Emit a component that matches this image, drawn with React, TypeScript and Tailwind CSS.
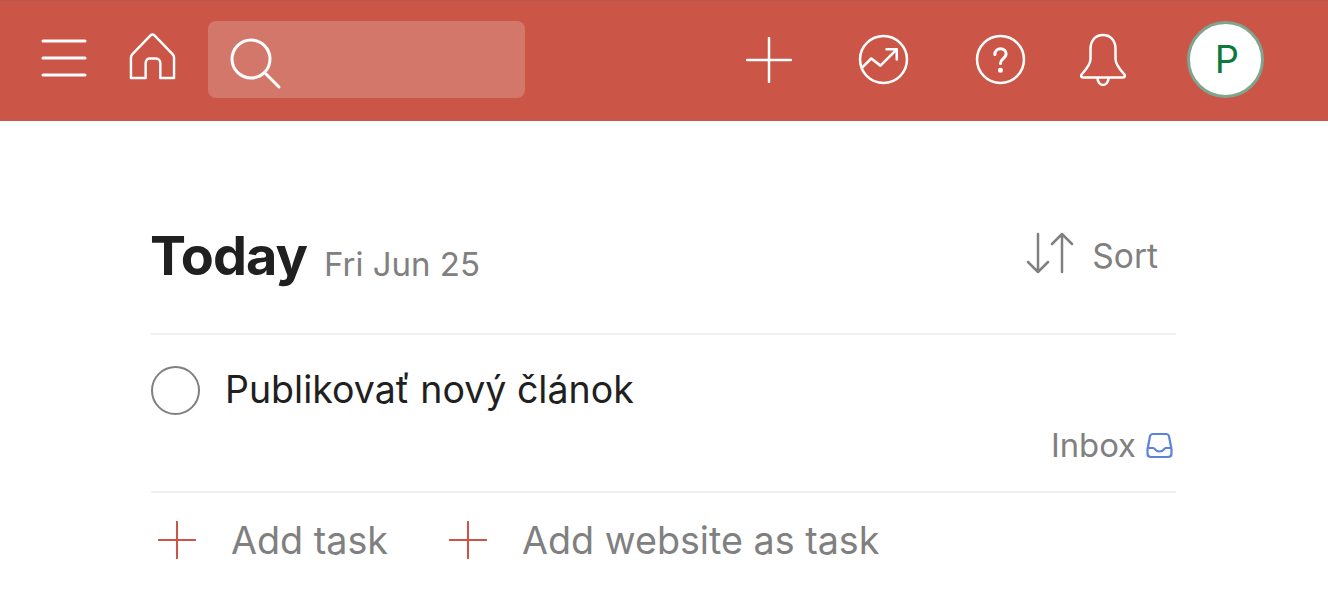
function Menu() {
  return (
    <svg width="46" height="38" viewBox="0 0 46 38" fill="none" stroke="white" strokeWidth="3" strokeLinecap="round">
      <path d="M2 2h42M2 19h42M2 36h42" />
    </svg>
  );
}

function Home() {
  return (
    <svg width="47" height="47" viewBox="0 0 48 48" fill="none" stroke="white" strokeWidth="2.500" strokeLinejoin="round">
      <path d="M2 25c0-1.500.5-2.500 1.500-3.500L22 2.500c1.200-1.200 2.800-1.200 4 0l18.500 19c1 1 1.500 2 1.500 3.500v21H32V31c0-3-2-5-4.500-5h-7C19 26 17 28 17 31v15H2z" />
    </svg>
  );
}

function Search() {
  return (
    <svg width="52" height="52" viewBox="0 0 52 52" fill="none" stroke="white" strokeWidth="3" strokeLinecap="round">
      <circle cx="21" cy="21" r="19" />
      <path d="M35 35l14 14" />
    </svg>
  );
}

function PlusIcon({ size, color, stroke }: { size: number; color: string; stroke: number }) {
  return (
    <svg width={size} height={size} viewBox="0 0 46 46" fill="none" stroke={color} strokeWidth={stroke} strokeLinecap="round">
      <path d="M23 1v44M1 23h44" />
    </svg>
  );
}

function Karma() {
  return (
    <svg width="51" height="51" viewBox="0 0 50 50" fill="none" stroke="white" strokeWidth="2.500" strokeLinecap="round" strokeLinejoin="round">
      <circle cx="25" cy="25" r="23" />
      <path d="M4 33l9-9 9 7 15-15M28 15h10v10" />
    </svg>
  );
}

function Help() {
  return (
    <svg width="51" height="51" viewBox="0 0 50 50" fill="none" stroke="white" strokeWidth="2.500" strokeLinecap="round">
      <circle cx="25" cy="25" r="23" />
      <path d="M19.500 20c0-3.500 2.500-5.500 5.500-5.500s5.500 2 5.500 5c0 4.500-5.500 4.500-5.500 9.500" strokeWidth="3" />
      <circle cx="25" cy="35.500" r="1.200" fill="white" />
    </svg>
  );
}

function Bell() {
  return (
    <svg width="48" height="54" viewBox="0 0 48 54" fill="none" stroke="white" strokeWidth="2.500" strokeLinejoin="round">
      <path d="M24 2c-8 0-12.500 6-12.500 14v10c0 5-3 9-8.500 15-1.500 1.500-1 3.500 1 3.500h40c2 0 2.500-2 1-3.500-5.500-6-8.500-10-8.500-15V16C36.500 8 32 2 24 2z" />
      <path d="M18.500 45c0 4 2.500 7 5.500 7s5.500-3 5.500-7" />
    </svg>
  );
}

function SortArrows() {
  return (
    <svg width="48" height="42" viewBox="0 0 48 42" fill="none" stroke="#808080" strokeWidth="2.500" strokeLinecap="round" strokeLinejoin="round">
      <path d="M12 2v38M2 30l10 10 10-10" />
      <path d="M36 2v38M26 12L36 2l10 10" />
    </svg>
  );
}

function InboxIcon() {
  return (
    <svg width="27" height="27" viewBox="0 0 27 27" fill="none" stroke="#5b84d6" strokeWidth="2.200" strokeLinecap="round" strokeLinejoin="round">
      <path d="M7 2h13c1.500 0 2.500.8 3 2.200l2.500 13v4.300c0 2-1.500 3.500-3.500 3.500H5c-2 0-3.500-1.500-3.500-3.500v-4.300L4 4.200C4.500 2.800 5.500 2 7 2z" />
      <path d="M2 16h5.500c1.500 0 1.500 3.500 6 3.500s4.500-3.500 6-3.500H25" />
    </svg>
  );
}

export default function App() {
  return (
    <div className="w-[1328px] h-[607px] overflow-hidden bg-white font-['Inter',sans-serif]">
      <header className="h-[121px] bg-[#cb5546] border-t border-[#b9594d] flex items-center pl-[41px] pb-[3px]">
        <div className="mb-[3px]">
          <Menu />
        </div>
        <div className="ml-[42px] mb-[6px]">
          <Home />
        </div>
        <div className="ml-[32px] w-[317px] h-[77px] rounded-[8px] bg-[#d4776b] flex items-center pl-[22px]">
          <div className="mt-[8px]">
            <Search />
          </div>
        </div>
        <div className="ml-[221px]">
          <PlusIcon size={46} color="white" stroke={2.5} />
        </div>
        <div className="ml-[66px]">
          <Karma />
        </div>
        <div className="ml-[66px]">
          <Help />
        </div>
        <div className="ml-[53px]">
          <Bell />
        </div>
        <div className="ml-[60px] w-[77px] h-[77px] rounded-full bg-white border-[3px] border-[#7fa58f] flex items-center justify-center pl-[3px] text-[38px] text-[#0d7a3c]">
          P
        </div>
      </header>

      <main className="w-[1025px] ml-[151px]">
        <div className="h-[214px] flex items-end pb-[48px] border-b-2 border-[#f0f0f0]">
          <h1 className="-ml-[1px] text-[54px] leading-[58px] font-bold text-[#202020] tracking-[-1px]">Today</h1>
          <span className="ml-[17px] mb-[-2px] text-[33px] leading-[46px] text-[#808080]">Fri Jun 25</span>
          <div className="ml-auto mr-[18px] flex items-center gap-[18px] mb-[4px]">
            <SortArrows />
            <span className="pt-[6px] text-[33.500px] text-[#808080]">Sort</span>
          </div>
        </div>

        <div className="h-[158px] border-b-2 border-[#f0f0f0]">
          <div className="flex items-center gap-[26px] pt-[31px]">
            <div className="w-[49px] h-[49px] rounded-full border-2 border-[#808080]" />
            <span className="-ml-[1px] mb-[2px] text-[37.500px] leading-[46px] text-[#202020]">Publikovať nový článok</span>
          </div>
          <div className="flex justify-end items-center gap-[10px] mt-[9px] pr-[3px]">
            <span className="text-[32.800px] leading-[42px] text-[#808080]">Inbox</span>
            <InboxIcon />
          </div>
        </div>

        <div className="flex items-center pt-[22px] pl-[7px]">
          <PlusIcon size={38} color="#cb5546" stroke={2.5} />
          <span className="ml-[35px] text-[37.700px] leading-[50px] text-[#808080]">Add task</span>
          <div className="ml-[61px]">
            <PlusIcon size={38} color="#cb5546" stroke={2.5} />
          </div>
          <span className="ml-[35px] text-[37.700px] leading-[50px] text-[#808080]">Add website as task</span>
        </div>
      </main>
    </div>
  );
}
